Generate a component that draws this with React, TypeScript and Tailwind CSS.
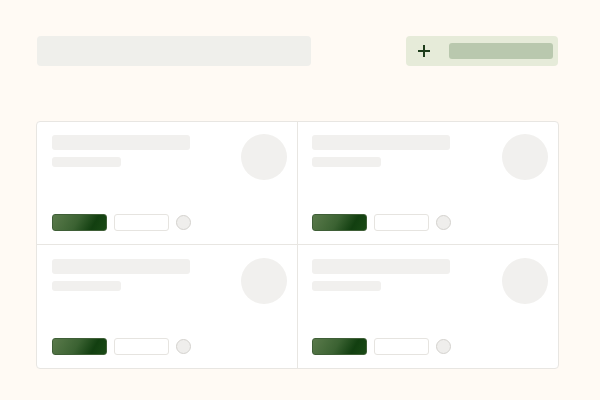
import React from "react";

function Cell({ right, bottom }: { right?: boolean; bottom?: boolean }) {
  return (
    <div
      className={
        "flex h-[123px] flex-col justify-between pr-[10px] pb-[13px] " +
        (right ? "border-r border-[#e8e6e2] pl-[15px] " : "pl-[14px] ") +
        (bottom ? "border-b border-[#e8e6e2] pt-[12px]" : "pt-[13px]")
      }
    >
      <div className="flex items-start justify-between">
        <div className="flex flex-col gap-[7px] pt-[1px]">
          <div className="h-[15px] w-[138px] rounded-[3px] bg-[#f1f0ee]" />
          <div className="h-[10px] w-[69px] rounded-[3px] bg-[#f1f0ee]" />
        </div>
        <div className="h-[46px] w-[46px] rounded-full bg-[#f1f0ee]" />
      </div>
      <div className="flex items-center gap-[7px]">
        <div className="h-[17px] w-[55px] rounded-[3px] border border-[#3f5f37] bg-[linear-gradient(120deg,#5a7a4b_0%,#3b6232_45%,#123f10_75%,#1a4a15_100%)]" />
        <div className="h-[17px] w-[55px] rounded-[3px] border border-[#e6e4e0] bg-white" />
        <div className="h-[15px] w-[15px] rounded-full border border-[#d4d2ce] bg-[#efeeec]" />
      </div>
    </div>
  );
}

export default function App() {
  return (
    <div className="h-[400px] w-[600px] bg-[#fffaf4] px-[37px] pt-[36px]" style={{ fontFamily: "Inter, sans-serif" }}>
      <div className="flex items-center justify-between pr-[5px]">
        <div className="h-[30px] w-[274px] rounded-[4px] bg-[#efefeb]" />
        <div className="flex h-[30px] w-[152px] items-center rounded-[4px] bg-[#e6ebd9] pl-[11px] pr-[5px]">
          <svg width="14" height="14" viewBox="0 0 14 14" className="shrink-0">
            <path d="M7 1v12M1 7h12" stroke="#1e3d1b" strokeWidth="2" />
          </svg>
          <div className="ml-[18px] h-[16px] flex-1 rounded-[3px] bg-[#b9c8ae]" />
        </div>
      </div>
      <div className="-ml-px mt-[55px] grid w-[523px] grid-cols-2 overflow-hidden rounded-[4px] border border-[#e8e6e2] bg-white">
        <Cell right bottom />
        <Cell bottom />
        <Cell right />
        <Cell />
      </div>
    </div>
  );
}
